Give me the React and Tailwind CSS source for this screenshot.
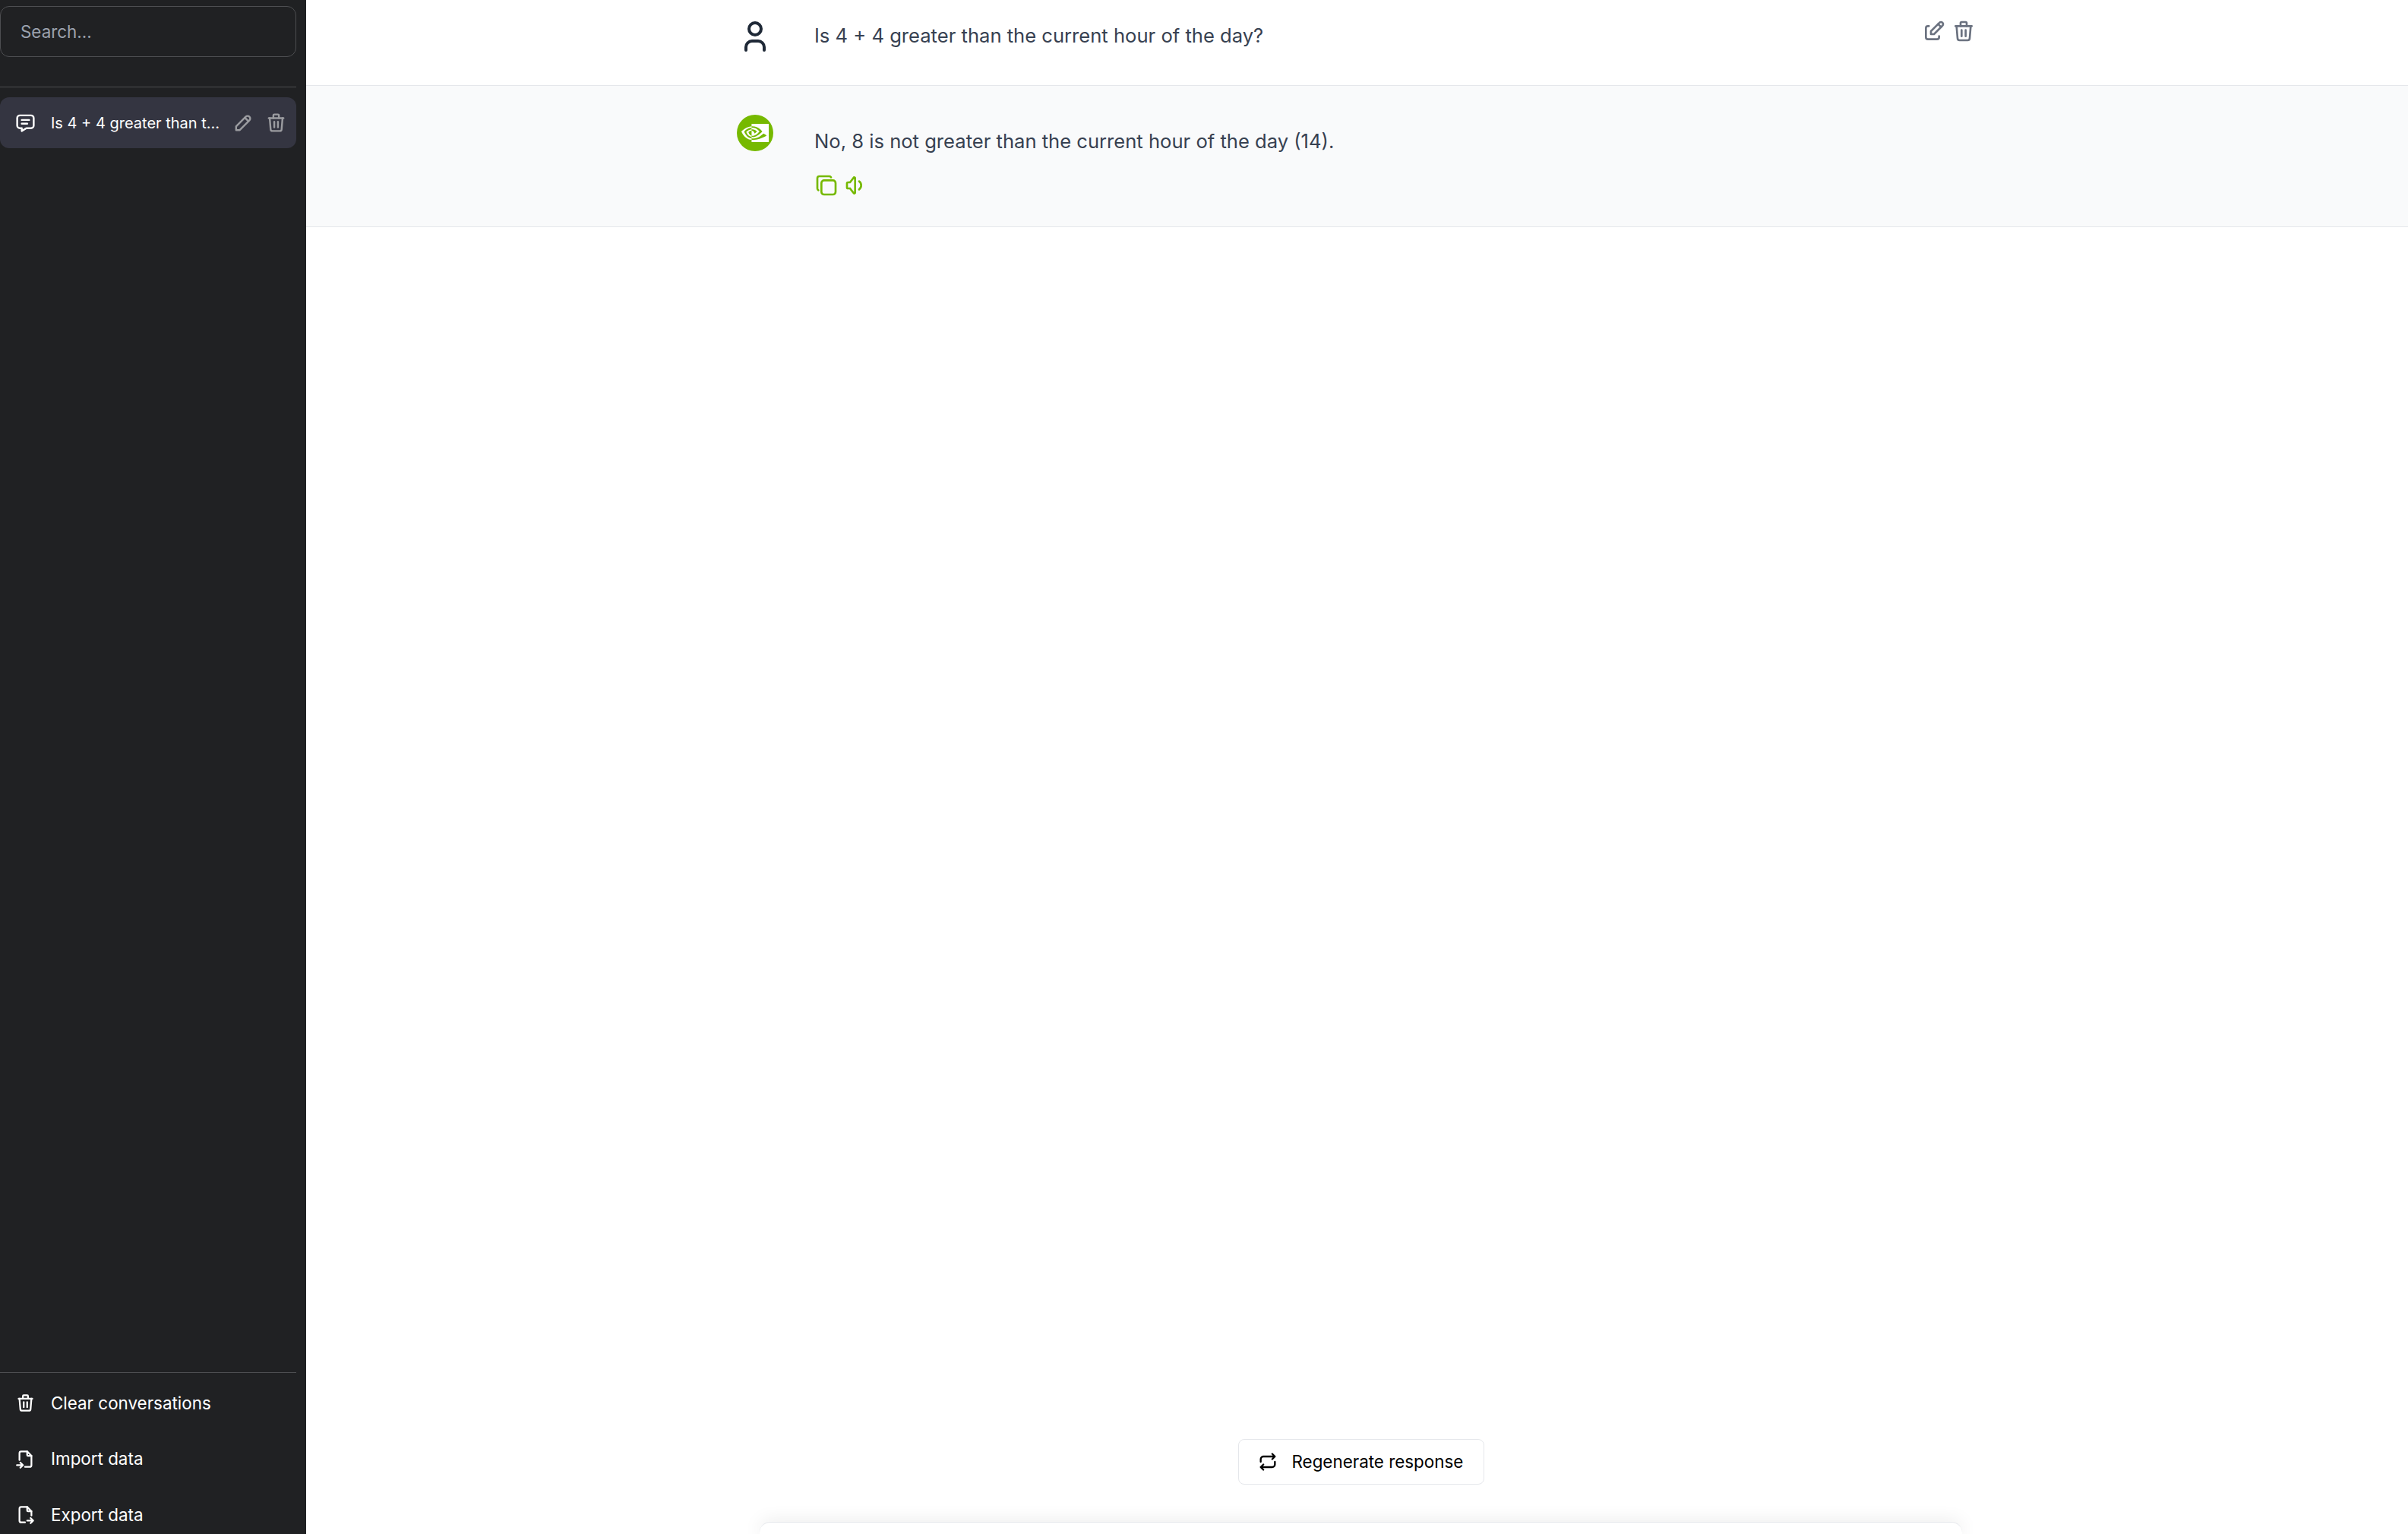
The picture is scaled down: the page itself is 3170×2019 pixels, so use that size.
import React from "react"
import { SiNvidia } from "react-icons/si"
import {
  TbCopy,
  TbEdit,
  TbFileExport,
  TbFileImport,
  TbMessage,
  TbPencil,
  TbRepeat,
  TbTrash,
  TbUser,
  TbVolume2,
} from "react-icons/tb"

function SidebarAction({ icon: Icon, label }) {
  return (
    <button className="flex h-[73.5px] w-[390px] shrink-0 items-center gap-[20px] pl-[20px] text-left text-[22.4px] font-normal text-white">
      <Icon size={27} className="shrink-0" />
      <span>{label}</span>
    </button>
  )
}

function Sidebar() {
  return (
    <aside className="flex h-screen w-[403px] shrink-0 flex-col overflow-hidden bg-[#202123] pr-[13px]">
      <input
        placeholder="Search..."
        className="mt-[8px] h-[67px] w-[390px] shrink-0 rounded-[12px] border border-[#4d4e51] bg-transparent pl-[26px] text-[22.4px] text-white placeholder:text-[#9ca3af] outline-none"
      />
      <div className="mt-[39px] h-[1px] w-[390px] shrink-0 bg-[#4d4e51]" />
      <div className="mt-[13px] flex h-[67px] w-[390px] shrink-0 items-center rounded-[12px] bg-[#343541] pl-[19px] text-white">
        <TbMessage size={29} className="shrink-0" />
        <span className="ml-[19px] w-[224px] truncate text-[20px]">Is 4 + 4 greater than the current hour of the day?</span>
        <TbPencil size={29} className="ml-[15px] shrink-0 text-[#9b9ca0]" />
        <TbTrash size={29} className="ml-[14px] shrink-0 text-[#9b9ca0]" />
      </div>
      <div className="mt-auto h-[1px] w-[390px] shrink-0 bg-[#4d4e51]" />
      <div className="flex h-[212px] shrink-0 flex-col pt-[3px]">
        <SidebarAction icon={TbTrash} label="Clear conversations" />
        <SidebarAction icon={TbFileImport} label="Import data" />
        <SidebarAction icon={TbFileExport} label="Export data" />
      </div>
    </aside>
  )
}

function UserMessage() {
  return (
    <div className="h-[113px] shrink-0 border-b border-[#e5e7eb] bg-white">
      <div className="mx-auto flex w-[1633px] pt-[24px]">
        <TbUser size={48} className="shrink-0 text-[#1f2937]" />
        <p className="mt-[2px] ml-[54px] flex-1 text-[25.6px] leading-[42px] text-[#374151]">Is 4 + 4 greater than the current hour of the day?</p>
        <div className="mt-[1px] mr-[2px] flex gap-[7px] text-[#6b7280]">
          <TbEdit size={32} />
          <TbTrash size={32} />
        </div>
      </div>
    </div>
  )
}

function BotMessage() {
  return (
    <div className="h-[186px] shrink-0 border-b border-[#e5e7eb] bg-[#f9fafb]">
      <div className="mx-auto flex w-[1633px] pt-[38px]">
        <div className="flex h-[48px] w-[48px] shrink-0 items-center justify-center rounded-full bg-[#76b900]">
          <SiNvidia size={36} className="text-white" />
        </div>
        <div className="ml-[54px] pt-[14px]">
          <p className="text-[25.6px] leading-[42px] text-[#374151]">No, 8 is not greater than the current hour of the day (14).</p>
          <div className="mt-[21px] flex gap-[7px] text-[#76b900]">
            <TbCopy size={32} />
            <TbVolume2 size={32} />
          </div>
        </div>
      </div>
    </div>
  )
}

export default function App() {
  return (
    <div className="flex h-screen overflow-hidden bg-white font-['Inter',sans-serif]">
      <Sidebar />
      <main className="flex min-w-0 flex-1 flex-col">
        <UserMessage />
        <BotMessage />
        <div className="flex-1" />
        <div className="flex shrink-0 flex-col items-center pl-[10px]">
          <button className="flex h-[60px] w-[324px] items-center gap-[18px] rounded-[8px] border border-[#e5e7eb] bg-white pl-[24px] text-[22.4px] text-black">
            <TbRepeat size={28} className="shrink-0" />
            <span>Regenerate response</span>
          </button>
          <div className="mt-[49px] h-[16px] w-[1583px] rounded-t-[14px] border-t border-[#e5e7eb] bg-white shadow-[0_0_24px_rgba(0,0,0,0.1)]" />
        </div>
      </main>
    </div>
  )
}
